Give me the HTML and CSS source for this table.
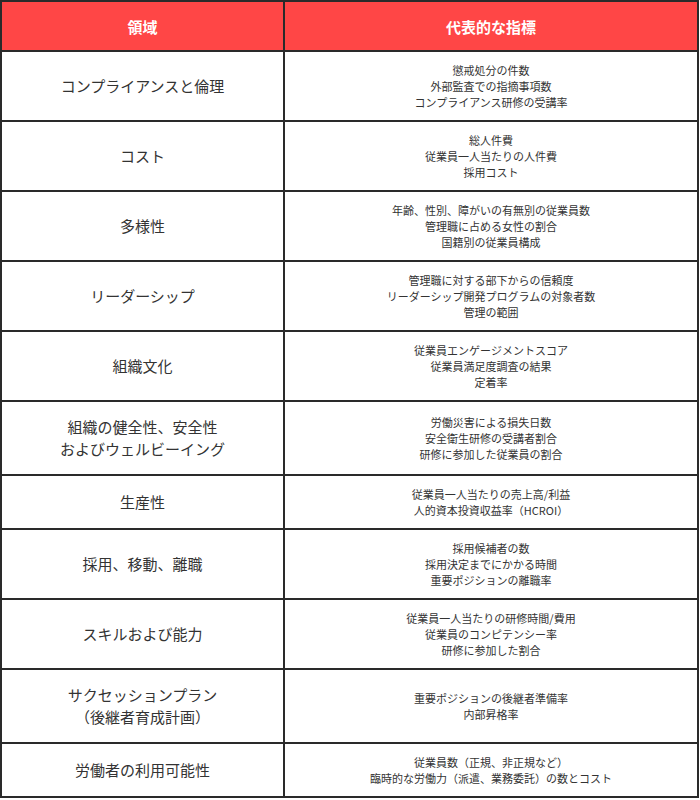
FILE: index.html
```html
<!DOCTYPE html>
<html lang="ja">
<head>
<meta charset="utf-8">
<link rel="stylesheet" href="styles.css">
</head>
<body>
<table class="kpi">
  <thead>
    <tr><th class="col-area">領域</th><th class="col-ind">代表的な指標</th></tr>
  </thead>
  <tbody>
    <tr><td class="area">コンプライアンスと倫理</td><td class="ind">懲戒処分の件数<br>外部監査での指摘事項数<br>コンプライアンス研修の受講率</td></tr>
    <tr><td class="area">コスト</td><td class="ind">総人件費<br>従業員一人当たりの人件費<br>採用コスト</td></tr>
    <tr><td class="area">多様性</td><td class="ind">年齢、性別、障がいの有無別の従業員数<br>管理職に占める女性の割合<br>国籍別の従業員構成</td></tr>
    <tr><td class="area">リーダーシップ</td><td class="ind">管理職に対する部下からの信頼度<br>リーダーシップ開発プログラムの対象者数<br>管理の範囲</td></tr>
    <tr><td class="area">組織文化</td><td class="ind">従業員エンゲージメントスコア<br>従業員満足度調査の結果<br>定着率</td></tr>
    <tr><td class="area">組織の健全性、安全性<br>およびウェルビーイング</td><td class="ind">労働災害による損失日数<br>安全衛生研修の受講者割合<br>研修に参加した従業員の割合</td></tr>
    <tr><td class="area">生産性</td><td class="ind">従業員一人当たりの売上高/利益<br>人的資本投資収益率（HCROI）</td></tr>
    <tr><td class="area">採用、移動、離職</td><td class="ind">採用候補者の数<br>採用決定までにかかる時間<br>重要ポジションの離職率</td></tr>
    <tr><td class="area">スキルおよび能力</td><td class="ind">従業員一人当たりの研修時間/費用<br>従業員のコンピテンシー率<br>研修に参加した割合</td></tr>
    <tr><td class="area">サクセッションプラン<br>（後継者育成計画）</td><td class="ind">重要ポジションの後継者準備率<br>内部昇格率</td></tr>
    <tr><td class="area">労働者の利用可能性</td><td class="ind">従業員数（正規、非正規など）<br>臨時的な労働力（派遣、業務委託）の数とコスト</td></tr>
  </tbody>
</table>
</body>
</html>
```

FILE: styles.css
```css
html, body {
  margin: 0;
  padding: 0;
  background: #ffffff;
}
body {
  font-family: "Noto Sans CJK JP", "Noto Sans", sans-serif;
  color: #333333;
}
.kpi {
  width: 699px;
  border-collapse: collapse;
  table-layout: fixed;
}
.kpi th, .kpi td {
  border: 2px solid #2a2a2a;
  text-align: center;
  vertical-align: middle;
}
.col-area { width: 281px; }
.kpi th {
  background: #ff4646;
  color: #ffffff;
  font-size: 15px;
  font-weight: 700;
  height: 48px;
  padding: 0;
}
.area {
  font-size: 15px;
  line-height: 22px;
  padding: 14px 8px;
}
.ind {
  font-size: 11px;
  line-height: 16px;
  padding: 10px 8px;
}
```
